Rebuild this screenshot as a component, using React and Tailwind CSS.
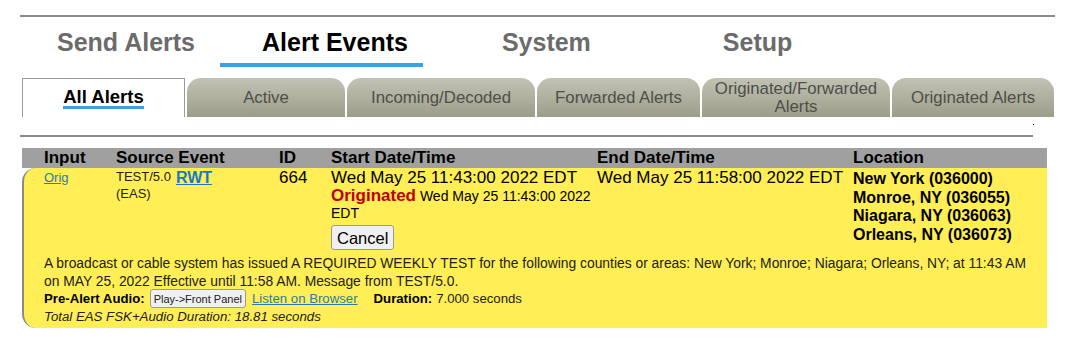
const topTabs = [
  { label: "Send Alerts", className: "ml-[37px]" },
  { label: "Alert Events", className: "ml-[67px]", active: true },
  { label: "System", className: "ml-[94px]" },
  { label: "Setup", className: "ml-[132px]" },
];

const subTabs = [
  { label: "Active", w: "w-[158px]" },
  { label: "Incoming/Decoded", w: "w-[188px]" },
  { label: "Forwarded Alerts", w: "w-[163px]" },
  { label: "Originated/Forwarded Alerts", w: "w-[188px]", wrap: true },
  { label: "Originated Alerts", w: "w-[162px]" },
];

const cols = "grid grid-cols-[72px_163px_52px_266px_256px_193px]";

const locations = ["New York (036000)", "Monroe, NY (036055)", "Niagara, NY (036063)", "Orleans, NY (036073)"];

export default function App() {
  return (
    <div className="w-[1090px] h-[349px] bg-white font-['Liberation_Sans',Arial,sans-serif] text-black overflow-hidden">
      <div className="ml-[20px] w-[1035px] pt-[15px]">
        <div className="h-[2px] bg-[#8a8a8a]" />

        <div className="flex h-[50px] items-start pt-[10px]">
          {topTabs.map((t) => (
            <div key={t.label} className={`${t.className} relative`}>
              <span className={`text-[25px] font-bold leading-[30px] ${t.active ? "text-black" : "text-[#6b6b6b]"}`}>
                {t.label}
              </span>
              {t.active && <div className="absolute left-[-42px] top-[36px] w-[203px] h-[4px] bg-[#3ea0e4]" />}
            </div>
          ))}
        </div>

        <div className="flex items-end h-[50px] pt-[11px]">
          <div className="w-[163px] h-[39px] ml-[2px] bg-white border border-b-0 border-[#9a9a9a] flex items-center justify-center">
            <span className="text-[18.5px] font-bold border-b-[3px] border-[#3ea0e4] leading-[19px]">All Alerts</span>
          </div>
          {subTabs.map((t) => (
            <div
              key={t.label}
              className={`${t.w} h-[39px] ml-[2px] rounded-t-[14px] bg-gradient-to-b from-[#c2c2b4] via-[#b0b09f] to-[#9c9c8a] flex items-center justify-center text-center text-[16.8px] leading-[18px] text-[#4e4e4a]`}
            >
              {t.wrap ? (
                <span>Originated/Forwarded<br />Alerts</span>
              ) : (
                t.label
              )}
            </div>
          ))}
        </div>

        <div className="relative h-[18px]">
          <div className="absolute right-[21px] top-[7px] w-[1px] h-[1px] bg-black" />
        </div>
        <div className="h-[2px] w-[1013px] bg-[#8a8a8a]" />

        <div className="mt-[11px] ml-[2px] w-[1025px]">
          <div className={`${cols} h-[20px] bg-[#a0a0a0] text-[17px] font-bold leading-[20px] pl-[22px]`}>
            <div>Input</div>
            <div>Source Event</div>
            <div>ID</div>
            <div>Start Date/Time</div>
            <div>End Date/Time</div>
            <div>Location</div>
          </div>

          <div className="bg-[#ffee55] border-l-2 border-[#8c8c80] rounded-l-[14px] pl-[20px] pb-[2px]">
            <div className={`${cols} items-start`}>
              <div className="text-[13px] leading-[18px] pt-[1px]">
                <a href="#" className="text-[#2c7ea6] underline">Orig</a>
              </div>
              <div className="flex items-start gap-[5px]">
                <div className="text-[13px] leading-[17px] text-[#222]">TEST/5.0<br />(EAS)</div>
                <a href="#" className="text-[16px] font-bold text-[#1b78c8] underline leading-[19px]">RWT</a>
              </div>
              <div className="text-[17px] leading-[20px]">664</div>
              <div>
                <div className="text-[17px] leading-[19px]">Wed May 25 11:43:00 2022 EDT</div>
                <div className="text-[14px] leading-[17px] pr-[4px]">
                  <span className="text-[17px] leading-[17px] font-bold text-[#c00000]">Originated</span> Wed May 25 11:43:00 2022 EDT
                </div>
                <button className="mt-[3px] h-[25px] px-[5px] text-[16.5px] bg-[#f0f0f0] border border-[#9a9a9a] rounded-[3px] leading-[20px]">
                  Cancel
                </button>
              </div>
              <div className="text-[17px] leading-[19px]">Wed May 25 11:58:00 2022 EDT</div>
              <div className="text-[16px] font-bold leading-[18.5px] pt-[2px]">
                {locations.map((l) => (
                  <div key={l}>{l}</div>
                ))}
              </div>
            </div>

            <div className="text-[13.85px] leading-[18px] text-[#222] pr-[2px] mt-[3px]">
              A broadcast or cable system has issued A REQUIRED WEEKLY TEST for the following counties or areas: New York; Monroe; Niagara; Orleans, NY; at 11:43 AM on MAY 25, 2022 Effective until 11:58 AM. Message from TEST/5.0.
            </div>
            <div className="flex items-center h-[18px] text-[13.2px] leading-[18px] text-[#222]">
              <span className="font-bold text-black">Pre-Alert Audio:</span>
              <button className="ml-[5px] h-[19px] px-[3px] text-[11px] bg-[#f0f0f0] border border-[#9a9a9a] rounded-[3px] leading-[14px]">
                Play-&gt;Front Panel
              </button>
              <a href="#" className="ml-[6px] text-[#2c7ea6] underline">Listen on Browser</a>
              <span className="ml-[16px] font-bold text-black">Duration:</span>
              <span className="ml-[4px]">7.000 seconds</span>
            </div>
            <div className="text-[13.25px] italic leading-[18px] text-[#222]">Total EAS FSK+Audio Duration: 18.81 seconds</div>
          </div>
        </div>
      </div>
    </div>
  );
}
